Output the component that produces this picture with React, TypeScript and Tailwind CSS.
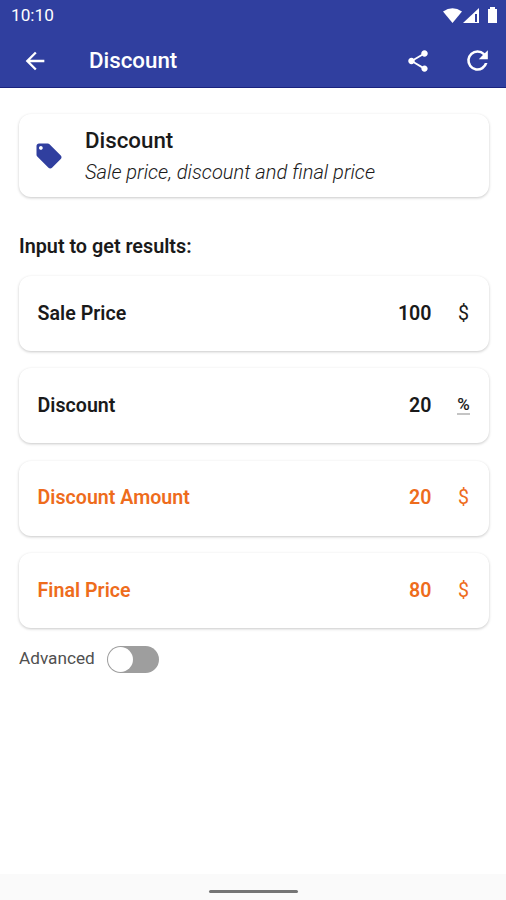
import React, { type FC } from "react";

interface ValueRowProps {
  label: string;
  value: string;
  unit: string;
  result?: boolean;
  underlined?: boolean;
}

const ValueRow: FC<ValueRowProps> = ({ label, value, unit, result, underlined }) => (
  <div
    className={`flex h-[75px] items-center rounded-xl bg-white pl-[18.5px] pr-[15.5px] text-[19.6px] shadow-[0_1px_3px_rgba(0,0,0,0.22)] ${
      result ? "text-[#ee6c1c]" : "text-[#1a1a1a]"
    }`}
  >
    <span className="flex-1 font-semibold tracking-[0.03px]">{label}</span>
    <span className="font-semibold">{value}</span>
    <span className="ml-[22px] flex w-[20px] justify-center">
      <span className={underlined ? "border-b-2 border-[#c4c4c4] text-[17px] font-medium leading-[17px]" : ""}>
        {unit}
      </span>
    </span>
  </div>
);

const App: FC = () => {
  return (
    <div className="flex h-[900px] w-[506px] flex-col overflow-hidden bg-white font-[Roboto,sans-serif] text-[#1a1a1a]">
      <header className="h-[88px] border-b border-[#1a237e] bg-[#303f9f] text-white">
        <div className="flex h-8 items-center justify-between pl-[11px] pr-[7px]">
          <span className="text-[17.2px]">10:10</span>
          <svg width="56" height="18" viewBox="0 0 56 18" fill="currentColor" aria-hidden="true">
            <path d="M0 4.5Q9.5-2 19 4.5L9.5 16Z" />
            <path d="M36 1v15H20Z" />
            <path d="M32 7h2v8h-2Z" fill="#303f9f" />
            <path d="M45 2h2V0h5v2h2v14h-9Z" />
          </svg>
        </div>
        <div className="flex h-[57px] items-center pl-[21px] pr-[13px]">
          <svg width="28" height="28" viewBox="0 0 24 24" fill="currentColor" aria-hidden="true">
            <path d="M20 11H7.83l5.59-5.59L12 4l-8 8 8 8 1.41-1.41L7.83 13H20z" />
          </svg>
          <h1 className="ml-[40px] flex-1 text-[22.3px] font-medium">Discount</h1>
          <svg width="26" height="26" viewBox="0 0 24 24" fill="currentColor" aria-hidden="true">
            <path d="M18 16.08c-.76 0-1.44.3-1.96.77L8.91 12.7c.05-.23.09-.46.09-.7s-.04-.47-.09-.7l7.05-4.11c.54.5 1.25.81 2.04.81 1.66 0 3-1.34 3-3s-1.34-3-3-3-3 1.34-3 3c0 .24.04.47.09.7L8.04 9.81C7.5 9.31 6.79 9 6 9c-1.66 0-3 1.34-3 3s1.34 3 3 3c.79 0 1.5-.31 2.04-.81l7.12 4.16c-.05.21-.08.43-.08.65 0 1.61 1.31 2.92 2.92 2.92s2.92-1.31 2.92-2.92-1.31-2.92-2.92-2.92z" />
          </svg>
          <svg className="ml-[31px]" width="31" height="31" viewBox="0 0 24 24" fill="currentColor" aria-hidden="true">
            <path d="M17.65 6.35A7.96 7.96 0 0 0 12 4a8 8 0 1 0 7.73 10h-2.08A6 6 0 1 1 12 6c1.66 0 3.14.69 4.22 1.78L13 11h7V4z" />
          </svg>
        </div>
      </header>

      <main className="flex-1 pl-[19px] pr-[17px] pt-[26px]">
        <section className="flex h-[83px] items-center rounded-xl bg-white pl-[15px] shadow-[0_1px_3px_rgba(0,0,0,0.22)]">
          <svg width="30" height="30" viewBox="0 0 24 24" fill="#303f9f" aria-hidden="true">
            <path d="m21.41 11.58-9-9C12.05 2.22 11.55 2 11 2H4c-1.1 0-2 .9-2 2v7c0 .55.22 1.05.59 1.42l9 9c.36.36.86.58 1.41.58s1.05-.22 1.41-.59l7-7c.37-.36.59-.86.59-1.41s-.23-1.06-.59-1.42M5.5 7C4.67 7 4 6.33 4 5.5S4.67 4 5.5 4 7 4.67 7 5.5 6.33 7 5.5 7" />
          </svg>
          <div className="ml-[21px]">
            <h2 className="text-[22.3px] font-medium leading-8">Discount</h2>
            <p className="text-[20.1px] font-light italic leading-8">Sale price, discount and final price</p>
          </div>
        </section>

        <h3 className="mt-[34px] text-[19.8px] font-semibold leading-8">Input to get results:</h3>

        <div className="mt-[13px] flex flex-col gap-[17.3px]">
          <ValueRow label="Sale Price" value="100" unit="$" />
          <ValueRow label="Discount" value="20" unit="%" underlined />
          <ValueRow label="Discount Amount" value="20" unit="$" result />
          <ValueRow label="Final Price" value="80" unit="$" result />
        </div>

        <div className="mt-[18px] flex items-center text-[17.2px] text-[#505050]">
          <span>Advanced</span>
          <button
            type="button"
            role="switch"
            aria-checked="false"
            aria-label="Advanced"
            className="ml-[12px] flex h-[27px] w-[52px] items-center rounded-full bg-[#9e9e9e] px-px"
          >
            <span className="size-[25px] rounded-full bg-white" />
          </button>
        </div>
      </main>

      <footer className="flex h-[26px] items-center justify-center bg-[#fafafa] pt-[8px]">
        <div className="h-[3px] w-[89px] rounded-full bg-[#757575]" />
      </footer>
    </div>
  );
};

export default App;
